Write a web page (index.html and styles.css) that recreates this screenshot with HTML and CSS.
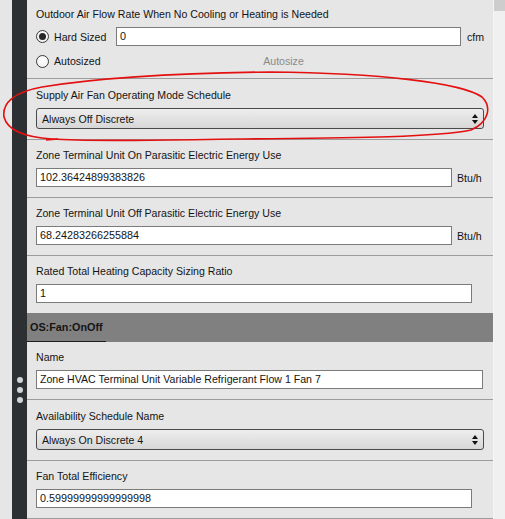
FILE: index.html
```html
<!DOCTYPE html>
<html>
<head>
<meta charset="utf-8">
<link rel="stylesheet" href="styles.css">
</head>
<body>
<div class="app">
  <div class="gutter"></div>
  <div class="rail">
    <div class="dots"><span></span><span></span><span></span></div>
  </div>
  <main class="content">
    <section class="field f-first">
      <div class="label">Outdoor Air Flow Rate When No Cooling or Heating is Needed</div>
      <div class="row r-hard">
        <span class="radio checked"></span><span class="rlabel">Hard Sized</span>
        <div class="input grow num">0</div><span class="unit u-cfm">cfm</span>
      </div>
      <div class="row r-auto">
        <span class="radio"></span><span class="rlabel">Autosized</span>
        <span class="autosize">Autosize</span>
      </div>
    </section>
    <section class="field f-select sep">
      <div class="label">Supply Air Fan Operating Mode Schedule</div>
      <div class="select"><span>Always Off Discrete</span><span class="arrows"><i class="up"></i><i class="down"></i></span></div>
    </section>
    <section class="field sep">
      <div class="label">Zone Terminal Unit On Parasitic Electric Energy Use</div>
      <div class="row"><div class="input grow num">102.36424899383826</div><span class="unit u-btu">Btu/h</span></div>
    </section>
    <section class="field sep">
      <div class="label">Zone Terminal Unit Off Parasitic Electric Energy Use</div>
      <div class="row"><div class="input grow num">68.24283266255884</div><span class="unit u-btu">Btu/h</span></div>
    </section>
    <section class="field">
      <div class="label">Rated Total Heating Capacity Sizing Ratio</div>
      <div class="row pad-r21"><div class="input grow num">1</div></div>
    </section>
    <header class="group"><span class="tab">OS:Fan:OnOff</span></header>
    <section class="field sep">
      <div class="label">Name</div>
      <div class="row pad-r10"><div class="input grow">Zone HVAC Terminal Unit Variable Refrigerant Flow 1 Fan 7</div></div>
    </section>
    <section class="field f-select sep">
      <div class="label">Availability Schedule Name</div>
      <div class="select"><span>Always On Discrete 4</span><span class="arrows"><i class="up"></i><i class="down"></i></span></div>
    </section>
    <section class="field sep">
      <div class="label">Fan Total Efficiency</div>
      <div class="row pad-r21"><div class="input grow num">0.59999999999999998</div></div>
    </section>
  </main>
  <div class="scrollbar"><div class="thumb"></div></div>
  <svg class="annot" width="505" height="160" viewBox="0 0 505 160">
    <path d="M 270 72 C 380 73, 462 83, 482 97 C 492 107, 489 122, 471 130 C 432 138, 330 138, 240 139 C 160 140, 92 142, 52 139 C 22 137, 7 129, 4 117 C 2 103, 14 92, 42 87 C 92 79, 172 73, 270 72 Z" fill="none" stroke="#e41010" stroke-width="1.6" stroke-linecap="round"/>
    <path d="M 46 140 L 58 139" fill="none" stroke="#e41010" stroke-width="1.3"/>
  </svg>
</div>
</body>
</html>
```

FILE: styles.css
```css
* { box-sizing: border-box; }
html, body { margin: 0; padding: 0; }
body {
  width: 505px;
  height: 519px;
  overflow: hidden;
  background: #e6e6e6;
  font-family: "Liberation Sans", Arial, sans-serif;
  font-size: 10.6px;
  color: #141414;
}
.app {
  position: relative;
  display: flex;
  width: 505px;
  height: 519px;
}
.gutter { width: 12px; background: #e6e6e6; flex: none; }
.rail {
  width: 15px;
  flex: none;
  background: #2c3033;
  display: flex;
  flex-direction: column;
  align-items: center;
}
.dots {
  margin-top: 377px;
  display: flex;
  flex-direction: column;
  gap: 4px;
  padding-left: 1px;
}
.dots span {
  display: block;
  width: 6px;
  height: 6px;
  border-radius: 50%;
  background: #d2d4d6;
}
.content {
  width: 466px;
  flex: none;
  background: #e6e6e6;
  display: flex;
  flex-direction: column;
}
.scrollbar {
  width: 12px;
  flex: none;
  background: #f0f0f0;
  border-left: 1px solid #f4f4f4;
}
.thumb {
  height: 11px;
  background: #cdcdcd;
}
.field {
  padding: 7px 0 10px 9px;
  flex: none;
}
.sep { border-bottom: 1px solid #9c9c9c; }
.f-first {
  padding-top: 6px;
  padding-bottom: 8px;
  border-bottom: 1px solid #9c9c9c;
}
.f-select { padding-top: 8px; padding-right: 9px; }
.label {
  height: 16px;
  line-height: 16px;
  white-space: nowrap;
}
.row {
  display: flex;
  align-items: center;
  margin-top: 5px;
}
.r-hard { margin-top: 5px; }
.r-auto { margin-top: 6px; height: 18px; }
.pad-r21 { padding-right: 21px; }
.pad-r10 { padding-right: 10px; }
.radio {
  flex: none;
  width: 13px;
  height: 13px;
  border-radius: 50%;
  border: 1px solid #3a3a3a;
  background: radial-gradient(circle at 50% 40%, #ffffff, #ececec);
  display: flex;
  align-items: center;
  justify-content: center;
}
.radio.checked::after {
  content: "";
  width: 7px;
  height: 7px;
  border-radius: 50%;
  background: #262626;
}
.rlabel {
  width: 67px;
  padding-left: 5px;
  flex: none;
  white-space: nowrap;
}
.input {
  height: 19px;
  line-height: 17px;
  border: 1px solid #7b7b7b;
  background: #ffffff;
  padding-left: 3px;
  white-space: nowrap;
  overflow: hidden;
}
.num { font-size: 10.8px; }
.grow { flex: 1; min-width: 0; }
.unit { flex: none; white-space: nowrap; }
.u-cfm { width: 32px; padding-left: 6px; }
.u-btu { width: 41px; padding-left: 5px; }
.autosize {
  width: 345px;
  text-align: center;
  color: #8a8a8a;
  padding-right: 10px;
}
.select {
  margin-top: 5px;
  height: 21px;
  border: 1px solid #4a4a4a;
  border-radius: 3px;
  background: linear-gradient(#eeeeee, #d7d7d7);
  display: flex;
  align-items: center;
  justify-content: space-between;
  padding: 0 4px 0 5px;
}
.arrows {
  display: flex;
  flex-direction: column;
  gap: 2px;
  padding-right: 1px;
}
.arrows i {
  display: block;
  width: 0;
  height: 0;
  border-left: 3.5px solid transparent;
  border-right: 3.5px solid transparent;
}
.arrows .up { border-bottom: 4px solid #111; }
.arrows .down { border-top: 4px solid #111; }
.group {
  height: 29px;
  background: #808080;
  display: flex;
  align-items: stretch;
  flex: none;
}
.tab {
  display: flex;
  align-items: center;
  width: 79px;
  padding-left: 3px;
  font-weight: bold;
  font-size: 10.8px;
  color: #151515;
  border-bottom: 1px solid #1e1e1e;
  white-space: nowrap;
}
.annot {
  position: absolute;
  left: 0;
  top: 0;
  pointer-events: none;
}
```
